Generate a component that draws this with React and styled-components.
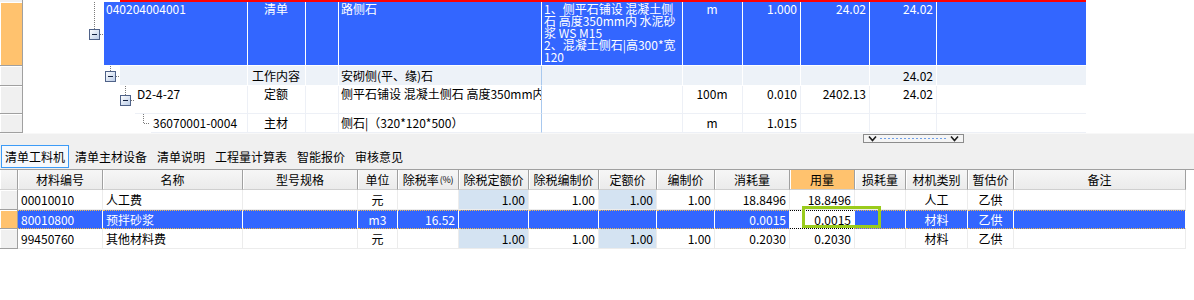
import React from 'react';
import styled, { createGlobalStyle, css } from 'styled-components';

const BLUE = '#3366ff';
const ORANGE = '#ffc26e';

const GlobalStyle = createGlobalStyle`
  * { box-sizing: border-box; }
  html, body { margin: 0; padding: 0; background: #ffffff; }
  body {
    font-family: "Noto Sans CJK SC", "Liberation Sans", sans-serif;
    font-size: 12px;
    color: #000;
  }
`;

const Page = styled.div`
  width: 1194px;
  height: 300px;
  overflow: hidden;
  background: #fff;
  display: flex;
  flex-direction: column;
`;

/* ---------- top tree grid ---------- */
const TopGrid = styled.section`
  flex: none;
  display: flex;
  flex-direction: column;
`;

const EdgeRow = styled.div`
  display: flex;
  height: 2px;
`;
const EdgeHead = styled.div`
  width: 23px;
  background: #f0f0f0;
  border-right: 1px solid #a0a0a0;
`;
const EdgeMark = styled.div`
  margin-left: 97px;
  width: 966px;
  background: #ff0000;
`;

const TOP_COLS = '23px 224px 58px 33px 203px 141px 60px 58px 69px 67px 150px 1fr';

const TopRow = styled.div`
  display: grid;
  grid-template-columns: ${TOP_COLS};
  height: ${p => p.$h}px;
`;

const RowHead = styled.div`
  background: ${p => (p.$active ? ORANGE : '#f0f0f0')};
  border-right: 1px solid #a0a0a0;
  border-bottom: 1px solid #a0a0a0;
  box-shadow: inset 1px 1px 0 #ffffff;
`;

const TreeCell = styled.div`
  display: flex;
  min-width: 0;
`;

const Gutter = styled.div`
  flex: none;
  width: ${p => p.$w}px;
  display: flex;
`;

const cellText = css`
  min-width: 0;
  white-space: pre;
  line-height: 12px;
  background: ${p => p.$tone.bg};
  color: ${p => p.$tone.fg};
  border-bottom: 1px solid ${p => p.$tone.line};
  display: flex;
  align-items: ${p => (p.$tone.middle ? 'center' : 'flex-start')};
  padding: ${p => (p.$tone.middle ? '0 3px 0 2px' : `${p.$tone.padTop}px 3px 0 2px`)};
`;

const CodeCell = styled.div`
  ${cellText}
  flex: 1;
`;

const justify = { left: 'flex-start', center: 'center', right: 'flex-end' };

const TCell = styled.div`
  ${cellText}
  border-left: 1px solid ${p => (p.$feat ? p.$tone.featLine : p.$tone.line)};
  justify-content: ${p => justify[p.$align]};
`;

const TRest = styled.div``;

/* ---------- splitter band ---------- */
const Band = styled.div`
  flex: none;
  height: 12px;
  background: #f0f0f0;
  border-top: 1px solid #f8f8f8;
  display: flex;
  align-items: flex-start;
  padding-left: 863px;
`;

/* ---------- tabs ---------- */
const TabBar = styled.nav`
  flex: none;
  height: 25px;
  background: #f0f0f0;
  border-bottom: 1px solid #a0a0a0;
  display: flex;
  align-items: flex-start;
  gap: 2px;
  padding-left: 1px;
`;

const Tab = styled.div`
  height: 23px;
  padding: 0 3px;
  line-height: 21px;
  white-space: nowrap;
  border: 1px solid ${p => (p.$active ? '#3c9bf7' : 'transparent')};
  background: ${p => (p.$active ? '#f6f9fd' : 'transparent')};
`;

/* ---------- bottom grid ---------- */
const BottomGrid = styled.section`
  flex: none;
  width: 1186px;
  display: flex;
  flex-direction: column;
`;

const BRow = styled.div`
  display: grid;
  grid-template-columns: ${p => p.$cols};
  height: ${p => p.$h}px;
  position: relative;
`;

const HeadCell = styled.div`
  background: ${p => (p.$hl ? ORANGE : 'linear-gradient(#f6f6f6, #ebebeb)')};
  border-right: 1px solid #a0a0a0;
  border-bottom: 1px solid #cfcfcf;
  box-shadow: inset 1px 0 0 #ffffff;
  display: flex;
  align-items: center;
  justify-content: center;
  white-space: nowrap;
`;

const Small = styled.span`
  font-size: 9px;
  letter-spacing: -0.3px;
  margin-left: 1px;
`;

const BHead = styled.div`
  background: ${p => (p.$active ? ORANGE : '#f0f0f0')};
  border-right: 1px solid #a0a0a0;
  border-bottom: 1px solid #a0a0a0;
  box-shadow: inset 1px 1px 0 #ffffff;
`;

const DCell = styled.div`
  display: flex;
  align-items: center;
  justify-content: ${p => justify[p.$align]};
  padding: 0 3px;
  white-space: nowrap;
  background: ${p => p.$bg};
  color: ${p => p.$fg};
  border-right: 1px solid ${p => p.$line};
  border-top: ${p => (p.$dots ? `1px dotted ${p.$dots}` : '0')};
  border-bottom: 1px ${p => (p.$dots ? 'dotted' : 'solid')} ${p => p.$dots || '#ececec'};
`;

const FocusRing = styled.div`
  position: absolute;
  left: 802px;
  top: -4px;
  width: 79px;
  height: 22px;
  border: 3px solid #9acb1c;
  pointer-events: none;
`;

/* ---------- drawings ---------- */
function TreeLines({ id, w, h, kind }) {
  const cy = Math.floor(h / 2) + 0.5;
  const dot = { stroke: '#7a7a7a', strokeDasharray: '1 1', fill: 'none', strokeWidth: 1 };
  if (kind === 'leaf') {
    const x = w - 8 + 0.5;
    return (
      <svg width={w} height={h}>
        <path d={`M${x} 0V${cy}H${w - 1}`} {...dot} />
      </svg>
    );
  }
  const bx = w - 15;
  const mx = bx + 5.5;
  return (
    <svg width={w} height={h}>
      <defs>
        <linearGradient id={id} x1="0" y1="0" x2="1" y2="1">
          <stop offset="0" stopColor="#ffffff" />
          <stop offset="1" stopColor="#b9cbe6" />
        </linearGradient>
      </defs>
      <line x1={mx} y1={0} x2={mx} y2={cy - 5} {...dot} />
      <line x1={bx + 11} y1={cy} x2={w} y2={cy} {...dot} />
      <rect x={bx + 0.5} y={cy - 5} width={10} height={10} fill={`url(#${id})`} stroke="#4f6288" />
      <line x1={bx + 3} y1={cy} x2={bx + 8} y2={cy} stroke="#13213f" strokeWidth="1" />
    </svg>
  );
}

function SplitGrip() {
  return (
    <svg width="101" height="9" viewBox="0 0 101 9">
      <rect x="0.5" y="0.5" width="100" height="8" fill="#f4f4f4" stroke="#8c8c8c" />
      <path d="M6 2.5 L9.5 6.5 L13 2.5" stroke="#1c1c1c" strokeWidth="1.6" fill="none" />
      <path d="M88 2.5 L91.5 6.5 L95 2.5" stroke="#1c1c1c" strokeWidth="1.6" fill="none" />
      <line x1="17" y1="4.5" x2="85" y2="4.5" stroke="#6f9ee6" strokeDasharray="2 2" />
    </svg>
  );
}

/* ---------- data ---------- */
const tones = {
  sel: { bg: BLUE, fg: '#fff', line: '#ffffff', featLine: '#ffffff', middle: false, padTop: 1 },
  work: { bg: '#edf2f8', fg: '#000', line: '#ffffff', featLine: '#a8c8ee', middle: true },
  quota: { bg: '#ffffff', fg: '#000', line: '#edf0f6', featLine: '#a8c8ee', middle: false, padTop: 2 },
  mat: { bg: '#ffffff', fg: '#000', line: '#edf0f6', featLine: '#a8c8ee', middle: true },
};

const topAlign = ['center', 'left', 'left', 'left', 'center', 'right', 'right', 'right', 'left'];

const topRows = [
  {
    id: 'r1', h: 64, active: true, indent: 81, kind: 'minus', tone: tones.sel,
    code: '040204004001',
    cells: ['清单', '', '路侧石',
      '1、侧平石铺设 混凝土侧\n石 高度350mm内 水泥砂\n浆 WS M15\n2、混凝土侧石|高300*宽\n120',
      'm', '1.000', '24.02', '24.02', ''],
  },
  {
    id: 'r2', h: 20, indent: 97, kind: 'minus', tone: tones.work,
    code: '',
    cells: ['工作内容', '', '安砌侧(平、缘)石', '', '', '', '', '24.02', ''],
  },
  {
    id: 'r3', h: 28, indent: 112, kind: 'minus', tone: tones.quota,
    code: 'D2-4-27',
    cells: ['定额', '', '侧平石铺设 混凝土侧石 高度350mm内', '', '100m', '0.010', '2402.13', '24.02', ''],
  },
  {
    id: 'r4', h: 19, indent: 128, kind: 'leaf', tone: tones.mat,
    code: '36070001-0004',
    cells: ['主材', '', '侧石|（320*120*500）', '', 'm', '1.015', '', '', ''],
  },
];

const tabs = ['清单工料机', '清单主材设备', '清单说明', '工程量计算表', '智能报价', '审核意见'];

const bCols = [
  { w: 85, a: 'left', h: '材料编号' },
  { w: 140, a: 'left', h: '名称' },
  { w: 115, a: 'left', h: '型号规格' },
  { w: 40, a: 'center', h: '单位' },
  { w: 61, a: 'right', h: '除税率', small: '(%)' },
  { w: 70, a: 'right', h: '除税定额价', tint: true },
  { w: 70, a: 'right', h: '除税编制价' },
  { w: 58, a: 'right', h: '定额价', tint: true },
  { w: 58, a: 'right', h: '编制价' },
  { w: 75, a: 'right', h: '消耗量' },
  { w: 65, a: 'right', h: '用量', hl: true, edit: true },
  { w: 51, a: 'right', h: '损耗量' },
  { w: 62, a: 'center', h: '材机类别' },
  { w: 46, a: 'center', h: '暂估价' },
  { w: 172, a: 'left', h: '备注' },
];

const bTemplate = ['18px', ...bCols.map(c => `${c.w}px`)].join(' ');

const bRows = [
  { h: 20, cells: ['00010010', '人工费', '', '元', '', '1.00', '1.00', '1.00', '1.00', '18.8496', '18.8496', '', '人工', '乙供', ''] },
  { h: 19, sel: true, cells: ['80010800', '预拌砂浆', '', 'm3', '16.52', '', '', '', '', '0.0015', '0.0015', '', '材料', '乙供', ''] },
  { h: 20, cells: ['99450760', '其他材料费', '', '元', '', '1.00', '1.00', '1.00', '1.00', '0.2030', '0.2030', '', '材料', '乙供', ''] },
];

function cellLook(row, col) {
  if (row.sel) {
    if (col.edit) return { bg: '#ffffff', fg: '#000', line: '#ffffff', dots: '#000000' };
    return { bg: BLUE, fg: '#fff', line: '#ffffff', dots: '#f2b84b' };
  }
  return { bg: col.tint ? '#d4e3f2' : '#ffffff', fg: '#000', line: '#ececec', dots: null };
}

export default function App() {
  return (
    <Page>
      <GlobalStyle />
      <TopGrid>
        <EdgeRow>
          <EdgeHead />
          <EdgeMark />
        </EdgeRow>
        {topRows.map(r => (
          <TopRow key={r.id} $h={r.h}>
            <RowHead $active={r.active} />
            <TreeCell>
              <Gutter $w={r.indent}>
                <TreeLines id={`g-${r.id}`} w={r.indent} h={r.h} kind={r.kind} />
              </Gutter>
              <CodeCell $tone={r.tone}>{r.code}</CodeCell>
            </TreeCell>
            {r.cells.map((c, i) => (
              <TCell key={i} $tone={r.tone} $align={topAlign[i]} $feat={i === 3}>
                {c}
              </TCell>
            ))}
            <TRest />
          </TopRow>
        ))}
      </TopGrid>

      <Band>
        <SplitGrip />
      </Band>

      <TabBar>
        {tabs.map((t, i) => (
          <Tab key={t} $active={i === 0}>{t}</Tab>
        ))}
      </TabBar>

      <BottomGrid>
        <BRow $cols={bTemplate} $h={20}>
          <HeadCell />
          {bCols.map(c => (
            <HeadCell key={c.h} $hl={c.hl}>
              {c.h}
              {c.small && <Small>{c.small}</Small>}
            </HeadCell>
          ))}
        </BRow>
        {bRows.map((r, ri) => (
          <BRow key={ri} $cols={bTemplate} $h={r.h}>
            <BHead $active={r.sel} />
            {r.cells.map((v, ci) => {
              const col = bCols[ci];
              const look = cellLook(r, col);
              return (
                <DCell key={ci} $align={col.a} $bg={look.bg} $fg={look.fg} $line={look.line} $dots={look.dots}>
                  {v}
                </DCell>
              );
            })}
            {r.sel && <FocusRing />}
          </BRow>
        ))}
      </BottomGrid>
    </Page>
  );
}
